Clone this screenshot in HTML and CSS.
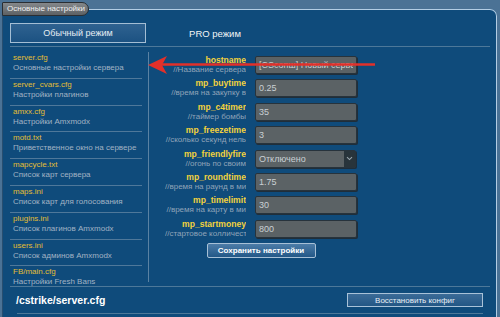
FILE: index.html
```html
<!DOCTYPE html>
<html lang="ru">
<head>
    <meta charset="UTF-8">
    <title>Основные настройки</title>
    <link rel="stylesheet" href="styles.css">
</head>
<body>
    <fieldset class="panel">
        <legend class="panel-title">Основные настройки</legend>

        <div class="modes">
            <button class="mode active">Обычный режим</button>
            <button class="mode">PRO режим</button>
        </div>

        <div class="main">
            <ul class="files">
                <li><b>server.cfg</b><span>Основные настройки сервера</span></li>
                <li><b>server_cvars.cfg</b><span>Настройки плагинов</span></li>
                <li><b>amxx.cfg</b><span>Настройки Amxmodx</span></li>
                <li><b>motd.txt</b><span>Приветственное окно на сервере</span></li>
                <li><b>mapcycle.txt</b><span>Список карт сервера</span></li>
                <li><b>maps.ini</b><span>Список карт для голосования</span></li>
                <li><b>plugins.ini</b><span>Список плагинов Amxmodx</span></li>
                <li><b>users.ini</b><span>Список админов Amxmodx</span></li>
                <li><b>FB/main.cfg</b><span>Настройки Fresh Bans</span></li>
            </ul>

            <form class="settings">
                <div class="row">
                    <div class="label"><b>hostname</b><span>//Название сервера</span></div>
                    <input type="text" class="field" value="[CSсопш] Новый сервер">
                </div>
                <div class="row">
                    <div class="label"><b>mp_buytime</b><span>//время на закупку в</span></div>
                    <input type="text" class="field" value="0.25">
                </div>
                <div class="row">
                    <div class="label"><b>mp_c4timer</b><span>//таймер бомбы</span></div>
                    <input type="text" class="field" value="35">
                </div>
                <div class="row">
                    <div class="label"><b>mp_freezetime</b><span>//сколько секунд нель</span></div>
                    <input type="text" class="field" value="3">
                </div>
                <div class="row">
                    <div class="label"><b>mp_friendlyfire</b><span>//огонь по своим</span></div>
                    <div class="field select">
                        <span>Отключено</span>
                        <span class="caret">
                            <svg width="7" height="5" viewBox="0 0 7 5"><path d="M1 1.2 L3.5 3.6 L6 1.2" fill="none" stroke="#9aa6ae" stroke-width="1.1"/></svg>
                        </span>
                    </div>
                </div>
                <div class="row">
                    <div class="label"><b>mp_roundtime</b><span>//время на раунд в ми</span></div>
                    <input type="text" class="field" value="1.75">
                </div>
                <div class="row">
                    <div class="label"><b>mp_timelimit</b><span>//время на карту в ми</span></div>
                    <input type="text" class="field" value="30">
                </div>
                <div class="row">
                    <div class="label"><b>mp_startmoney</b><span>//стартовое колличест</span></div>
                    <input type="text" class="field" value="800">
                </div>
                <div class="save-row">
                    <button type="button" class="save">Сохранить настройки</button>
                </div>
            </form>

            <!-- стрелка-подсказка -->
            <svg class="arrow" width="370" height="36" viewBox="0 0 370 36">
                <line x1="150" y1="17.5" x2="365" y2="17.5" stroke="#e2302a" stroke-width="2.6"/>
                <path d="M138 18 L157 9 L152 18 L157 27 Z" fill="#e2302a"/>
            </svg>
        </div>

        <div class="footer">
            <div class="footer-inner">
                <span class="path">/cstrike/server.cfg</span>
                <button class="restore">Восстановить конфиг</button>
            </div>
        </div>
    </fieldset>
</body>
</html>
```

FILE: styles.css
```css
body {
    margin: 0;
    height: 317px;
    overflow: hidden;
    background-color: #4b7295;
    font-family: "Liberation Sans", Arial, sans-serif;
}
.panel {
    box-sizing: border-box;
    margin: 2px 3px 0 2px;
    padding: 0 6px 0 7px;
    height: 316px;
    background-color: #0f4b7b;
    border: 1px solid #b3cde4;
    border-left-color: #274e70;
    border-radius: 0 7px 0 0;
}
.panel-title {
    margin-left: -8px;
    padding: 0 3px 0 4px;
    height: 12px;
    line-height: 12px;
    font-size: 8px;
    color: #f0f1f2;
    background: linear-gradient(#85888b, #5d6164);
    border: 1px solid #2a2e32;
    border-radius: 1px 7px 7px 1px;
}
.modes {
    display: flex;
    align-items: center;
    margin-top: 7px;
    padding-bottom: 3px;
    border-bottom: 1px solid #4d7899;
}
.mode {
    width: 130px;
    height: 20px;
    padding: 0;
    border: none;
    background: none;
    color: #f2f4f6;
    font-family: inherit;
    font-size: 9.5px;
    margin-left: 4px;
}
.mode.active {
    width: 136px;
    margin-left: 0;
    font-size: 9px;
    color: #e6edf3;
    border: 1px solid #a4bed4;
    background: linear-gradient(#2f6290, #1c5282);
}
.main {
    position: relative;
    display: flex;
    height: 239px;
    border-bottom: 1px solid #4d7899;
}
.files {
    list-style: none;
    margin: 5px 0 4px 0;
    padding: 0 6px 0 0;
    width: 132px;
    border-right: 1px solid #5a82a3;
}
.files li {
    height: 24.8px;
    padding: 1px 0 0 3px;
    border-bottom: 1px solid #4f789a;
    font-size: 8px;
    line-height: 10px;
}
.files li:last-child {
    border-bottom: none;
}
.files b {
    display: block;
    font-weight: normal;
    color: #e2be35;
}
.files span {
    display: block;
    color: #a2b3c4;
    white-space: nowrap;
}
.settings {
    width: 192px;
    margin: 0 0 0 16px;
    padding-top: 9px;
}
.row {
    display: flex;
    align-items: center;
    gap: 9px;
    height: 18px;
    margin-bottom: 5.4px;
}
.label {
    width: 81px;
    overflow: hidden;
    white-space: nowrap;
    text-align: right;
    font-size: 8px;
    line-height: 10px;
}
.label b,
.label span {
    display: block;
}
.label b {
    font-size: 8.6px;
    color: #f3d23d;
}
.label span {
    color: #8fa4b9;
}
.field {
    box-sizing: border-box;
    width: 102px;
    height: 18px;
    padding: 0 3px;
    margin: 0;
    background-color: #5b6265;
    border: 1px solid #27333c;
    border-radius: 2px;
    color: #c9d0d4;
    font-family: inherit;
    font-size: 9px;
    box-shadow: 1px 1px 0 #1f2e3a;
}
.select {
    display: flex;
    align-items: center;
    justify-content: space-between;
    padding-right: 0;
    width: 101px;
}
.caret {
    display: flex;
    align-items: center;
    justify-content: center;
    width: 11px;
    height: 16px;
    background-color: #28343b;
}
.save-row {
    display: flex;
    justify-content: center;
    margin-top: 5px;
}
.save {
    width: 109px;
    height: 15px;
    padding: 0;
    border: 1px solid #a7c0d6;
    border-radius: 2px;
    background: linear-gradient(#4c7ca8, #235887);
    color: #ffffff;
    font-family: inherit;
    font-size: 8px;
    font-weight: bold;
}
.arrow {
    position: absolute;
    left: 0;
    top: 0;
}
.footer {
    padding: 0 7px;
}
.footer-inner {
    display: flex;
    align-items: center;
    justify-content: space-between;
    height: 26px;
    border-bottom: 1px solid #4d7899;
}
.path {
    margin-left: -1px;
    color: #ffffff;
    font-size: 10.5px;
    font-weight: bold;
}
.restore {
    width: 136px;
    height: 14px;
    padding: 0;
    border: 1px solid #a9c2d8;
    background: linear-gradient(#3b6b97, #235785);
    color: #e8eff6;
    font-family: inherit;
    font-size: 8px;
}
```
